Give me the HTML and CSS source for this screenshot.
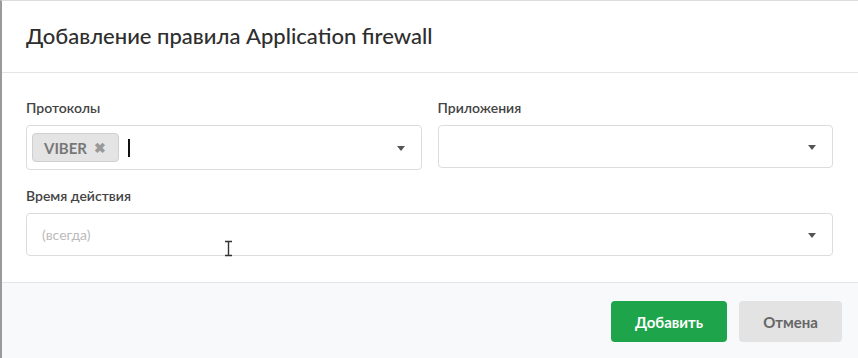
FILE: index.html
```html
<!DOCTYPE html>
<html lang="ru">
<head>
<meta charset="utf-8">
<link rel="stylesheet" href="styles.css">
</head>
<body>
<div class="modal">
  <div class="modal-header">
    <h1 class="modal-title">Добавление правила Application firewall</h1>
  </div>
  <div class="modal-body">
    <div class="row">
      <div class="field">
        <label class="label">Протоколы</label>
        <div class="select select-multi">
          <span class="tag">VIBER <span class="tag-x">✖</span></span>
          <span class="caret-line"></span>
          <span class="arrow"></span>
        </div>
      </div>
      <div class="field">
        <label class="label">Приложения</label>
        <div class="select">
          <span class="arrow"></span>
        </div>
      </div>
    </div>
    <div class="field full">
      <label class="label">Время действия</label>
      <div class="select">
        <span class="placeholder">(всегда)</span>
        <span class="arrow"></span>
        <svg class="ibeam" width="9" height="17" viewBox="0 0 9 17">
          <path d="M1 1.5h7M1 15.5h7M4.5 1.5v14" stroke="#333" stroke-width="1.4" fill="none"/>
        </svg>
      </div>
    </div>
  </div>
  <div class="modal-footer">
    <button class="btn btn-green">Добавить</button>
    <button class="btn btn-grey">Отмена</button>
  </div>
</div>
</body>
</html>
```

FILE: styles.css
```css
* { box-sizing: border-box; }
html, body { margin: 0; padding: 0; background: #fff; }
body {
  font-family: Lato, "Open Sans", "Liberation Sans", sans-serif;
  color: #333;
  width: 858px;
  height: 358px;
  overflow: hidden;
}
.modal {
  height: 358px;
  border-left: 2px solid #9a9a9a;
  border-top: 1px solid #dcdcdc;
  display: flex;
  flex-direction: column;
}
.modal-header {
  height: 72px;
  border-bottom: 1px solid #e3e6e8;
  display: flex;
  align-items: center;
  padding: 0 24px 2px;
}
.modal-title {
  margin: 0;
  font-size: 22px;
  font-weight: 500;
  color: #2e2e2e;
  letter-spacing: 0;
}
.modal-body {
  padding: 26px 25px 26px 24px;
}
.row {
  display: flex;
  gap: 16px;
  align-items: flex-start;
  margin-bottom: 17px;
}
.row .field { flex: 1; }
.label {
  display: block;
  font-size: 14px;
  line-height: 18px;
  font-weight: 600;
  color: #444;
  margin-bottom: 8px;
}
.select {
  position: relative;
  height: 43px;
  border: 1px solid #dcdcdc;
  border-radius: 4px;
  background: #fff;
  display: flex;
  align-items: center;
  padding: 0 30px 0 15px;
}
.select-multi {
  height: 45px;
  padding-left: 5px;
}
.tag {
  display: inline-flex;
  align-items: center;
  height: 29px;
  padding: 0 12px 0 11px;
  background: #e4e4e4;
  border: 1px solid #cfcfcf;
  border-radius: 4px;
  font-size: 15px;
  font-weight: 700;
  color: #777;
  margin-right: 9px;
}
.tag-x {
  font-size: 14px;
  color: #999;
  margin-left: 7px;
}
.caret-line {
  width: 2px;
  height: 18px;
  background: #111;
}
.arrow {
  position: absolute;
  right: 16px;
  top: 50%;
  margin-top: -2px;
  width: 0;
  height: 0;
  border-left: 4px solid transparent;
  border-right: 4px solid transparent;
  border-top: 5px solid #555;
}
.placeholder {
  font-size: 14px;
  color: #bbb;
}
.ibeam {
  position: absolute;
  left: 197px;
  top: 26px;
}
.modal-footer {
  flex: 1;
  border-top: 1px solid #e3e6e8;
  background: #f7f9fa;
  display: flex;
  justify-content: flex-end;
  align-items: flex-start;
  gap: 12px;
  padding: 18px 16px 0 0;
}
.btn {
  height: 41px;
  border: none;
  border-radius: 4px;
  font-family: Lato, "Open Sans", "Liberation Sans", sans-serif;
  font-size: 15px;
  font-weight: 700;
  padding: 0;
}
.btn-green {
  width: 116px;
  background: #1ea44a;
  color: #fff;
}
.btn-grey {
  width: 103px;
  background: #e3e3e3;
  color: #666;
}
```
